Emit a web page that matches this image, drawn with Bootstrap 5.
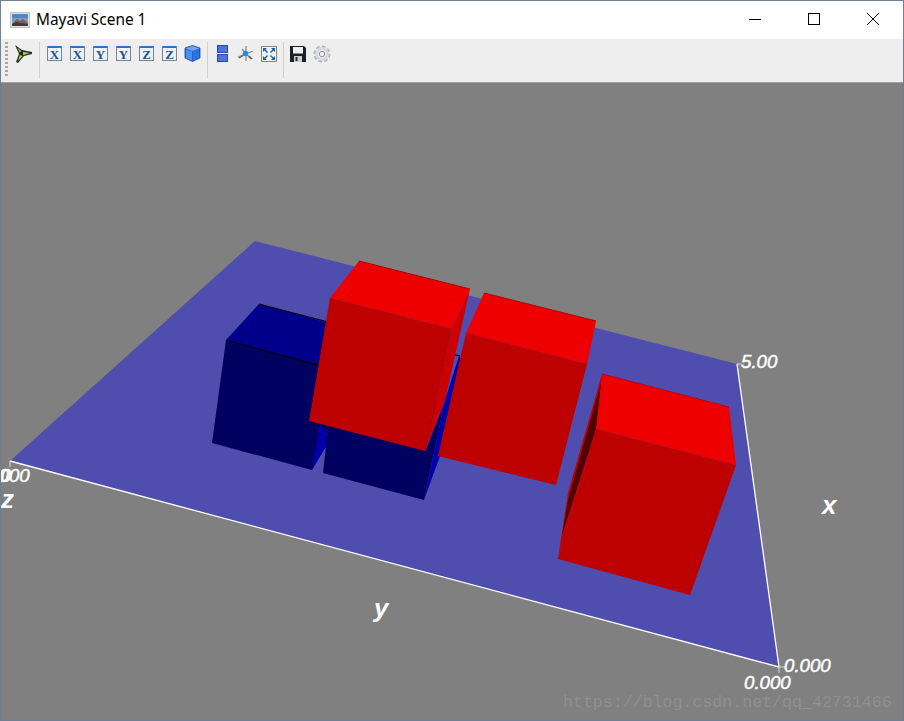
<!DOCTYPE html>
<html lang="en">
<head>
<meta charset="utf-8">
<title>Mayavi Scene 1</title>
<link href="https://cdn.jsdelivr.net/npm/bootstrap@5.3.0/dist/css/bootstrap.min.css" rel="stylesheet">
<style>
html,body{height:100%;margin:0;overflow:hidden;background:#808080}
.win-frame{height:721px;width:904px;border:1px solid #6f8095;font-family:"Noto Sans","Open Sans",sans-serif}
.title-bar{height:38px;background:#fff;color:#000;font-size:15.4px;padding-left:9px}
.title-ico{width:20px;height:16px;margin-right:6px;margin-top:11px;flex:none}
.title-text{line-height:38px}
.win-btns{margin-left:auto;margin-right:1px}
.win-btn{width:59px;height:36px;display:flex;align-items:center;justify-content:center}
.tool-bar{height:44px;background:#eeeeee;border-bottom:1px solid #a0a0a0;padding-left:4px;padding-top:3px;align-items:flex-start}
.grip{width:3px;height:36px;flex:none;background-image:repeating-linear-gradient(to bottom,#a8a8a8 0 2px,transparent 2px 4px)}
.tool-sep{width:1px;height:36px;background:#d0d0d0;flex:none}
.tool-btn{width:23px;height:23px;flex:none;display:flex;align-items:center;justify-content:center}
.tool-first{margin-left:3px}
.sep-first{margin-left:5px}
.set-first{margin-left:3px}
.sep-b{margin-left:3px}
.after-b{margin-left:3px}
.sep-c{margin-left:3px}
.after-c{margin-left:2px}
.gear-btn{margin-left:1px}
.scene-wrap{flex:1 1 auto;min-height:0;background:#808080}
.scene-svg{display:block;width:902px;height:637px}
.ax-txt{font-family:"Liberation Sans",Arial,sans-serif;font-style:italic;font-weight:400;fill:#fff;stroke:#fff;stroke-width:.45px}
.ax-lbl{font-family:"Liberation Sans",Arial,sans-serif;font-style:italic;font-weight:700;fill:#fff;font-size:26px}
.wm-txt{font-family:"Liberation Mono",monospace;font-size:16.6px;fill:#9a9a94;opacity:.62}
.ltr{font-family:"Liberation Serif",serif;font-weight:700;font-size:13px;fill:#24508e}
</style>
</head>
<body>
<div class="win-frame d-flex flex-column">
  <div class="title-bar d-flex align-items-start">
    <svg class="title-ico" viewBox="0 0 20 16" aria-hidden="true">
      <rect x=".5" y=".5" width="19" height="15" fill="#e2e2e2" stroke="#c0c0c0"/>
      <rect x="2" y="2" width="16" height="12" fill="#7a9cc8"/>
      <rect x="2" y="2" width="16" height="4" fill="#4f86c6"/>
      <path d="M2 12l5-5 3 2 3-2 5 4v3H2z" fill="#8a5a48"/>
      <path d="M2 12l4-2 4 1 8 1v2H2z" fill="#3e3a44"/>
    </svg>
    <span class="title-text">Mayavi Scene 1</span>
    <div class="win-btns d-flex">
      <div class="win-btn"><svg width="14" height="14" viewBox="0 0 14 14"><path d="M1 7.5h12" stroke="#000"/></svg></div>
      <div class="win-btn"><svg width="14" height="14" viewBox="0 0 14 14"><rect x="1.5" y="1.5" width="11" height="11" fill="none" stroke="#000"/></svg></div>
      <div class="win-btn"><svg width="14" height="14" viewBox="0 0 14 14"><path d="M1 1l12 12M13 1L1 13" stroke="#000" fill="none"/></svg></div>
    </div>
  </div>
  <div class="tool-bar d-flex">
    <div class="grip"></div>
    <div class="tool-btn tool-first">
      <svg width="20" height="20" viewBox="0 0 20 20"><path d="M2 1L9 6l10 2v2L11 12l-6 7-2-1L6 10z" fill="#1f3328"/><path d="M4.500 3.500L8 7 7 9zM10 8l7 1-7 2zM7 11l2.500 1L5 17z" fill="#c8d258"/><circle cx="8.500" cy="9.500" r="1.400" fill="#14261c"/></svg>
    </div>
    <div class="tool-sep sep-first"></div>
    <div class="d-flex set-first">
      <div class="tool-btn"><svg width="15" height="15" viewBox="0 0 15 15"><rect x=".5" y=".5" width="14" height="14" fill="#eaf3fb" stroke="#75848f"/><rect x="1" y="0" width="13" height="2" fill="#2a74c9"/><text class="ltr" x="7.500" y="12.800" text-anchor="middle">X</text></svg></div>
      <div class="tool-btn"><svg width="15" height="15" viewBox="0 0 15 15"><rect x=".5" y=".5" width="14" height="14" fill="#eaf3fb" stroke="#75848f"/><rect x="1" y="0" width="13" height="2" fill="#2a74c9"/><text class="ltr" x="7.500" y="12.800" text-anchor="middle">X</text></svg></div>
      <div class="tool-btn"><svg width="15" height="15" viewBox="0 0 15 15"><rect x=".5" y=".5" width="14" height="14" fill="#eaf3fb" stroke="#75848f"/><rect x="1" y="0" width="13" height="2" fill="#2a74c9"/><text class="ltr" x="7.500" y="12.800" text-anchor="middle">Y</text></svg></div>
      <div class="tool-btn"><svg width="15" height="15" viewBox="0 0 15 15"><rect x=".5" y=".5" width="14" height="14" fill="#eaf3fb" stroke="#75848f"/><rect x="1" y="0" width="13" height="2" fill="#2a74c9"/><text class="ltr" x="7.500" y="12.800" text-anchor="middle">Y</text></svg></div>
      <div class="tool-btn"><svg width="15" height="15" viewBox="0 0 15 15"><rect x=".5" y=".5" width="14" height="14" fill="#eaf3fb" stroke="#75848f"/><rect x="1" y="0" width="13" height="2" fill="#2a74c9"/><text class="ltr" x="7.500" y="12.800" text-anchor="middle">Z</text></svg></div>
      <div class="tool-btn"><svg width="15" height="15" viewBox="0 0 15 15"><rect x=".5" y=".5" width="14" height="14" fill="#eaf3fb" stroke="#75848f"/><rect x="1" y="0" width="13" height="2" fill="#2a74c9"/><text class="ltr" x="7.500" y="12.800" text-anchor="middle">Z</text></svg></div>
      <div class="tool-btn"><svg width="17" height="17" viewBox="0 0 17 17"><path d="M8.500 .5l7.500 2.500v10l-7.500 3.500L1 13V3z" fill="#2a5fd0" stroke="#26489a" stroke-width=".8"/><path d="M1.500 3.500l7-2.500 7 2.500-7 2.500z" fill="#6fa4f2"/><path d="M8.800 6.500v9l6.200-3V4.200z" fill="#2f72e6"/><path d="M2 4.500l6 2v9l-6-2.500z" fill="#4a90f4"/></svg></div>
    </div>
    <div class="tool-sep sep-b"></div>
    <div class="tool-btn after-b"><svg width="11" height="17" viewBox="0 0 11 17"><rect x=".5" y=".5" width="10" height="7" fill="#4a73dc" stroke="#2b4aa0"/><rect x=".5" y="9.500" width="10" height="7" fill="#4a73dc" stroke="#2b4aa0"/></svg></div>
    <div class="tool-btn"><svg width="17" height="17" viewBox="0 0 17 17"><path d="M9 1v15M1 12l15-6M5 4l9 10" stroke="#8a8a8a" stroke-width="1.300" fill="none"/><path d="M2 13l5-3M12 11l3 3" stroke="#5a5a5a" stroke-width="1.200"/><circle cx="8.500" cy="8.500" r="2.800" fill="#1f8fe6"/></svg></div>
    <div class="tool-btn"><svg width="16" height="16" viewBox="0 0 16 16"><rect x=".5" y=".5" width="15" height="15" fill="#eef4fa" stroke="#8a8468"/><path d="M2 2h4L4.500 3.500 7 6 6 7 3.500 4.500 2 6zM14 2v4l-1.500-1.500L10 7 9 6l2.500-2.500L10 2zM2 14v-4l1.500 1.500L6 9l1 1-2.500 2.500L6 14zM14 14h-4l1.500-1.500L9 10l1-1 2.500 2.500L14 10z" fill="#1f5fa8"/></svg></div>
    <div class="tool-sep sep-c"></div>
    <div class="tool-btn after-c"><svg width="16" height="16" viewBox="0 0 16 16"><path d="M0 0h14l2 2v14H0z" fill="#1d2026"/><rect x="3" y="1" width="10" height="6.500" fill="#eef0f2"/><rect x="4" y="10" width="8" height="6" fill="#c9ccd0"/><rect x="5.500" y="11" width="2" height="4" fill="#2a2d33"/></svg></div>
    <div class="tool-btn gear-btn"><svg width="18" height="18" viewBox="0 0 18 18"><circle cx="9" cy="9" r="6.800" fill="none" stroke="#b4b6bd" stroke-width="3.600" stroke-dasharray="3.300 2"/><circle cx="9" cy="9" r="5.600" fill="none" stroke="#d8d9de" stroke-width="2.600"/><circle cx="9" cy="9" r="2.700" fill="#eeeeee" stroke="#8e9199"/></svg></div>
  </div>
  <div class="scene-wrap">
    <svg class="scene-svg" viewBox="1 83 902 637" aria-label="3D bar chart scene">
      <rect x="0" y="83" width="904" height="638" fill="#808080"/>
      <polygon points="255,241 737,364 779,667 10,461" fill="#4f4dae"/>
      <path d="M10,461 L779,667 M737,364 L779,667" stroke="#fff" stroke-width="1.300" fill="none"/>
      <path d="M10,461v6M737,364h5M779,667h6M779,667v6" stroke="#dcdcdc" stroke-width="1" fill="none"/>
      <!-- blue bars -->
      <polygon points="226,340 259,304 340,326 340,405 312,470" fill="#00008a"/>
      <polygon points="226,340 212,443 312,470 332,410 332,367" fill="#000060"/>
      <polygon points="312,470 330,440 320,424" fill="#0000a8"/>
      <path d="M259,304 L328,322 M226,340 L320,366" stroke="#000" stroke-width="1.100"/>
      <polygon points="323,473 424,500 445,400 330,410" fill="#000060"/>
      <polygon points="424,500 445,400 459,356 475,380 440,456" fill="#0000a8"/>
      <path d="M452,354 L460,356" stroke="#000" stroke-width="1.100"/>
      <!-- red 1 -->
      <polygon points="359,261 470,289 452,329 330,298" fill="#ee0000"/>
      <polygon points="470,289 452,329 425,451 445,400" fill="#cc0000"/>
      <polygon points="330,298 452,329 425,451 309,421" fill="#bd0000"/>
      <path d="M359,261 L470,289" stroke="#b00000" stroke-width="1"/>
      <path d="M445,400 L425,451" stroke="#a8107a" stroke-width=".8"/>
      <!-- red 2 -->
      <polygon points="484,293 596,321 587,364 466,333" fill="#ee0000"/>
      <polygon points="466,333 587,364 556,485 438,456" fill="#bd0000"/>
      <path d="M484,293 L596,321" stroke="#b00000" stroke-width="1"/>
      <!-- red 3 -->
      <polygon points="602,374 729,407 736,465 596,429" fill="#ee0000"/>
      <polygon points="602,374 568,493 558,559 596,429" fill="#c00000"/>
      <polygon points="601,383 596,429 562,535 568,500" fill="#500000"/>
      <polygon points="568,493 562,533 558,559" fill="#960070"/>
      <polygon points="596,429 736,465 690,595 558,559" fill="#bd0000"/>
      <path d="M602,374 L729,407" stroke="#c00000" stroke-width="1"/>
      <!-- labels -->
      <text class="ax-txt" x="741" y="368" font-size="18.700">5.00</text>
      <text class="ax-txt" x="784" y="672" font-size="18.700">0.000</text>
      <text class="ax-txt" x="744" y="689" font-size="18.700">0.000</text>
      <text class="ax-txt" x="-17" y="482" font-size="18.700">0.000</text>
      <text class="ax-txt" x="-35.500" y="482" font-size="18.700">0.000</text>
      <text class="ax-lbl" x="1" y="508">z</text>
      <text class="ax-lbl" x="374" y="617">y</text>
      <text class="ax-lbl" x="822" y="514">x</text>
      <text class="wm-txt" x="563" y="707">https://blog.csdn.net/qq_42731466</text>
    </svg>
  </div>
</div>
</body>
</html>
